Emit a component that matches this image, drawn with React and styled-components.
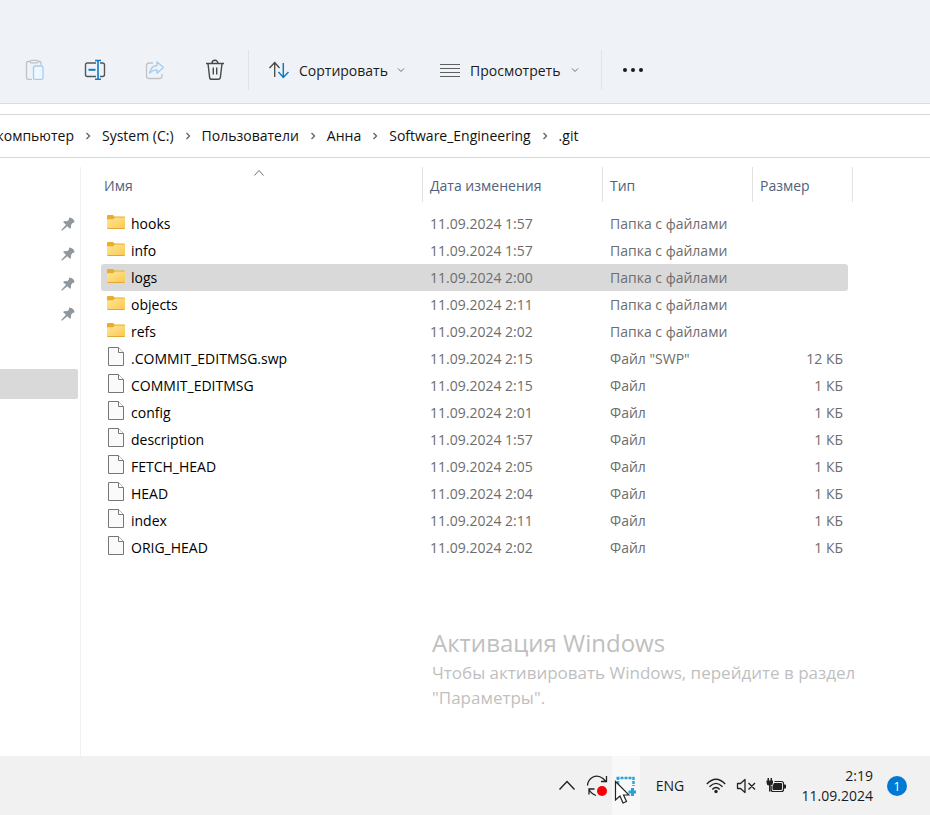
import React from "react";
import styled, { createGlobalStyle } from "styled-components";

const GlobalStyle = createGlobalStyle`
  * { box-sizing: border-box; }
  body {
    margin: 0;
    background: #fff;
    color: #1b1b1b;
    font: 14px/20px "Open Sans", "Noto Sans", sans-serif;
  }
  button {
    margin: 0;
    padding: 0;
    border: 0;
    background: none;
    color: inherit;
    font: inherit;
  }
  svg { display: block; flex: none; }
`;

const Page = styled.div`
  position: relative;
  display: flex;
  flex-direction: column;
  min-height: 100vh;
  overflow: hidden;
`;

const Toolbar = styled.header`
  display: flex;
  align-items: center;
  padding: 50px 0 13px 5px;
  background: #eff3f8;
  border-bottom: 1px solid #d9dde2;
`;

const ToolIcon = styled.button`
  display: grid;
  place-items: center;
  width: 60px;
  height: 40px;
`;

const ToolDivider = styled.span`
  width: 1px;
  height: 40px;
  margin-left: ${(p) => (p.$wide ? 22 : 3)}px;
  background: #dfe3e8;
`;

const ToolMenu = styled.button`
  display: flex;
  align-items: center;
  gap: ${(p) => p.$gap}px;
  height: 40px;
  margin-left: ${(p) => p.$offset}px;
`;

const ToolLabel = styled.span`
  width: ${(p) => p.$width}px;
  padding-top: 1px;
  text-align: left;
  white-space: nowrap;
`;

const AddressBar = styled.nav`
  margin-top: 10px;
  border: solid #d6d6d6;
  border-width: 1px 0;
`;

const Crumbs = styled.ol`
  display: flex;
  align-items: center;
  height: 42px;
  margin: 0;
  padding: 0;
  list-style: none;
  color: #111;
`;

const Crumb = styled.li`
  display: flex;
  align-items: center;
  justify-content: flex-end;
  flex: none;
  width: ${(p) => (p.$clipped ? "74px" : "auto")};
`;

const CrumbLink = styled.a`
  color: inherit;
  text-decoration: none;
  white-space: nowrap;
`;

const CrumbArrow = styled.li`
  display: grid;
  place-items: center;
  flex: none;
  width: 28px;
`;

const Body = styled.div`
  display: flex;
  flex: 1;
  padding-top: 9px;
`;

const Sidebar = styled.aside`
  flex: none;
  width: 81px;
  padding: 42px 2px 0 0;
  border-right: 1px solid #f1f1f1;
`;

const PinButton = styled.button`
  display: flex;
  align-items: center;
  justify-content: flex-end;
  width: 100%;
  height: 30px;
  padding-right: 3px;
`;

const CurrentPlace = styled.div`
  height: 30px;
  margin-top: 40px;
  border-radius: 0 2px 2px 0;
  background: #d9d9d9;
`;

const Main = styled.main`
  flex: 1;
  min-width: 0;
  padding-left: 20px;
`;

const FileTable = styled.table`
  width: 752px;
  table-layout: fixed;
  border-collapse: separate;
  border-spacing: 0;
`;

const Col = styled.col`
  width: ${(p) => p.$width}px;
`;

const HeadCell = styled.th`
  height: 43px;
  padding: 0;
  vertical-align: top;
  text-align: left;
  font-weight: 400;
`;

const HeadButton = styled.button`
  position: relative;
  display: block;
  width: 100%;
  height: 35px;
  padding: 3px 0 0 ${(p) => (p.$first ? 3 : 7)}px;
  border-right: 1px solid #e2e2e2;
  color: #51627a;
  text-align: left;
`;

const SortMark = styled.span`
  position: absolute;
  top: 2px;
  left: calc(50% - 9px);
`;

const Row = styled.tr`
  height: 27px;
  color: #6d6d6d;

  td {
    padding: 0 0 0 7px;
    white-space: nowrap;
    background: ${(p) => (p.$selected ? "#d9d9d9" : "transparent")};
    background-clip: padding-box;
  }
  td:first-child {
    padding-left: 5px;
    border-radius: 3px 0 0 3px;
    color: #000;
  }
  td:last-child {
    padding-right: 5px;
    border-right: 5px solid transparent;
    border-radius: 0 8px 8px 0 / 0 3px 3px 0;
    text-align: right;
  }
`;

const FileName = styled.div`
  display: flex;
  align-items: center;
  gap: 5px;

  svg { margin-bottom: 3px; }
`;

const Watermark = styled.div`
  position: absolute;
  right: 58px;
  bottom: 105px;
  width: 440px;
  color: #bfbfbf;
  font-size: 17px;
  line-height: 25px;
  pointer-events: none;
`;

const WatermarkTitle = styled.div`
  font-size: 24px;
  line-height: 34px;
`;

const Taskbar = styled.footer`
  display: flex;
  align-items: center;
  justify-content: flex-end;
  height: 59px;
  padding-right: 23px;
  background: #f1f1f1;
`;

const TrayButton = styled.button`
  position: relative;
  display: grid;
  place-items: center;
  width: ${(p) => p.$width || 30}px;
  height: 100%;
  background: ${(p) => (p.$hover ? "#f8f8f8" : "transparent")};
`;

const Clock = styled.button`
  width: 82px;
  margin-right: 14px;
  text-align: right;
  font-size: 14px;
`;

const Badge = styled.button`
  width: 20px;
  height: 20px;
  border-radius: 50%;
  background: #0078d4;
  color: #fff;
  font-size: 13px;
  line-height: 20px;
  text-align: center;
`;

const Pointer = styled.span`
  position: absolute;
  top: 24px;
  left: 2px;
`;

const Svg = ({ w, h = w, children, ...rest }) => (
  <svg width={w} height={h} viewBox={`0 0 ${w} ${h}`} fill="none" aria-hidden="true" {...rest}>
    {children}
  </svg>
);

const PasteIcon = () => (
  <Svg w={22} strokeWidth="1.3">
    <path d="M8 20.3H4Q2.5 20.3 2.5 18.5V4Q2.5 2.5 4 2.5H6M14 2.5h1.500Q17 2.500 17 4v2" stroke="#bfc3c8" />
    <rect x="6" y="1.300" width="8" height="2.600" rx="1.300" stroke="#bfc3c8" />
    <rect x="9.500" y="7" width="9.500" height="13.400" rx="1.500" stroke="#a3cdf0" fill="#eff6fd" />
  </Svg>
);

const RenameIcon = () => (
  <Svg w={22} strokeWidth="1.4">
    <path d="M12 4H3.500Q1.500 4 1.500 6v9.500Q1.500 17.500 3.500 17.500H12M16 4h2.500Q20.500 4 20.500 6v9.500Q20.500 17.500 18.500 17.500H16" stroke="#555" />
    <path d="M4.500 10.800h7" stroke="#0f7ac6" strokeWidth="2" />
    <path d="M11 1.500h6M11 20.300h6M14 1.500v19" stroke="#0f7ac6" strokeWidth="1.600" />
  </Svg>
);

const ShareIcon = () => (
  <Svg w={22} strokeWidth="1.3" strokeLinejoin="round">
    <path d="M9 4H5Q2.500 4 2.500 6.500v10.500Q2.500 19.500 5 19.500h10.500Q18 19.500 18 17v-2" stroke="#bfc3c8" />
    <path d="M13 3v3.500Q7 7 5.500 14Q9 10.600 13 10.800v3.400l6.500-5.700z" stroke="#a3cdf0" />
  </Svg>
);

const TrashIcon = () => (
  <Svg w={22} stroke="#484848" strokeWidth="1.4">
    <path d="M2 4.500h18M8 4.300a3 3 0 0 1 6 0M4 4.500l1.600 13.800Q5.800 20.300 7.700 20.300h6.600Q16.200 20.300 16.400 18.300L18 4.500M9.300 8.500v7M12.700 8.500v7" />
  </Svg>
);

const SortIcon = () => (
  <Svg w={20} h={20} strokeWidth="1.3">
    <path d="M5.700 17V2.500M.500 8l5.200-5.500L10.500 8" stroke="#454545" />
    <path d="M14.300 3v14.500M9.500 12l4.800 5.500L19.500 12" stroke="#0f7ac6" strokeWidth="1.500" />
  </Svg>
);

const ListIcon = () => (
  <Svg w={20} stroke="#606060">
    <path d="M0 4.500h20M0 8.500h20M0 12.500h20M0 16.500h20" />
  </Svg>
);

const DownIcon = () => (
  <Svg w={8} stroke="#707070">
    <path d="M1 2.500l3 3 3-3" />
  </Svg>
);

const DotsIcon = () => (
  <Svg w={22} h={6} fill="#1b1b1b">
    <circle cx="3" cy="3" r="2" />
    <circle cx="11" cy="3" r="2" />
    <circle cx="19" cy="3" r="2" />
  </Svg>
);

const CrumbIcon = () => (
  <Svg w={8} h={8} stroke="#606060" strokeWidth="1.300">
    <path d="M2.500 1l3 3-3 3" />
  </Svg>
);

const PinIcon = () => (
  <Svg w={14} h={14} fill="#8f989f">
    <path d="M8.300.500Q10.500.500 12 2t1.500 3.300Q12.500 6 11.500 6L10 8q.500 2-.800 4L6.300 9.200 1 13.800.200 13 5 7.800 2 5Q4 3.700 6.200 4.300L8 2.500Q7.800 1.500 8.300.500z" />
  </Svg>
);

const FolderIcon = () => (
  <Svg w={20} h={18}>
    <defs>
      <linearGradient id="folder" x1="0" y1="0" x2="1" y2="1">
        <stop offset="0" stopColor="#ffe59a" />
        <stop offset="1" stopColor="#fbc94c" />
      </linearGradient>
    </defs>
    <path d="M1 3Q1 2 2 2h5l1.500 1.500H18q1 0 1 1V9H1z" fill="#e9ad28" />
    <path d="M1 6.200h6L9 4.500h10V15q0 1-1 1H2q-1 0-1-1z" fill="url(#folder)" />
    <path d="M1.500 15.500h17" stroke="#e0a83b" />
  </Svg>
);

const FileIcon = () => (
  <Svg w={20} h={22} stroke="#777">
    <path d="M2.500 1.500h10l5 5v13h-15z" fill="#fafafa" />
    <path d="M12.500 1.500v5h5" fill="#fff" />
  </Svg>
);

const UpIcon = ({ w = 14, h = 8, color = "#707070", weight = 1 }) => (
  <Svg w={w} h={h} stroke={color} strokeWidth={weight}>
    <path d={`M1.500 ${h - 1.5}L${w / 2} 1.500L${w - 1.5} ${h - 1.5}`} />
  </Svg>
);

const SyncIcon = () => (
  <Svg w={22} h={24} stroke="#222" strokeWidth="1.300">
    <path d="M1.500 11.500Q2 5.500 7 3t10 1.500l3 3M20.500 2v5.500H15M8.500 15H3v5.500M3 15.500Q5.500 20 10 21.500" />
    <circle cx="16" cy="17" r="5" fill="#f60008" stroke="none" />
  </Svg>
);

const SnipIcon = () => (
  <Svg w={20} h={20} stroke="#27a3da" strokeWidth="2.400">
    <path d="M.500 2h18M2 1v17M17.500 1v9M2 17.500h9" strokeDasharray="3 1" />
    <path d="M16.500 12v8M12.500 16h8" strokeWidth="3" />
  </Svg>
);

const PointerIcon = () => (
  <Svg w={16} h={25}>
    <path d="M1.500 1.500v18.500l4.500-4 3 7 3.500-1.500-3-6.500h5.500z" fill="#fff" stroke="#222" strokeWidth="1.200" />
  </Svg>
);

const WifiIcon = () => (
  <Svg w={20} h={18} stroke="#222" strokeWidth="1.400">
    <path d="M.800 7Q10-2.500 19.200 7M3.500 9.800q6.500-6.800 13 0M6.300 12.500q3.700-3.900 7.400 0" />
    <circle cx="10" cy="14.500" r="1.700" fill="#222" stroke="none" />
  </Svg>
);

const VolumeIcon = () => (
  <Svg w={20} h={18} stroke="#222" strokeWidth="1.300" strokeLinejoin="round">
    <path d="M1.500 6.500h3l4.500-4v13l-4.500-4h-3zM12.500 6l6.500 6.500M19 6l-6.500 6.500" />
  </Svg>
);

const BatteryIcon = () => (
  <Svg w={20} h={18}>
    <path d="M8.500 4.500H15.500Q17.500 4.500 17.500 6.500v6Q17.500 14.500 15.500 14.500H7Q5.200 14.500 5.200 12.500V9" stroke="#222" strokeWidth="1.200" />
    <path d="M8 6h7q1 0 1 1v5q0 1-1 1H7.500q-1 0-1-1V9zM18 7.500h1.200q.800 0 .800.800v2.400q0 .800-.800.800H18z" fill="#222" />
    <path d="M.500 3.500h6.500v2Q7 8.200 4.500 8.500V14.500H3V8.500Q.500 8.200.500 5.500zM1.500 1H3v3H1.500zM4.500 1H6v3H4.500z" fill="#222" />
  </Svg>
);

const crumbs = ["компьютер", "System (C:)", "Пользователи", "Анна", "Software_Engineering", ".git"];

const columns = [
  { title: "Имя", width: 322 },
  { title: "Дата изменения", width: 180 },
  { title: "Тип", width: 150 },
  { title: "Размер", width: 100 },
];

const files = [
  ["hooks", "1:57", "Папка с файлами", ""],
  ["info", "1:57", "Папка с файлами", ""],
  ["logs", "2:00", "Папка с файлами", ""],
  ["objects", "2:11", "Папка с файлами", ""],
  ["refs", "2:02", "Папка с файлами", ""],
  [".COMMIT_EDITMSG.swp", "2:15", "Файл \"SWP\"", "12 КБ"],
  ["COMMIT_EDITMSG", "2:15", "Файл", "1 КБ"],
  ["config", "2:01", "Файл", "1 КБ"],
  ["description", "1:57", "Файл", "1 КБ"],
  ["FETCH_HEAD", "2:05", "Файл", "1 КБ"],
  ["HEAD", "2:04", "Файл", "1 КБ"],
  ["index", "2:11", "Файл", "1 КБ"],
  ["ORIG_HEAD", "2:02", "Файл", "1 КБ"],
];

export default function App() {
  return (
    <Page>
      <GlobalStyle />
      <Toolbar>
        <ToolIcon aria-label="Вставить" disabled><PasteIcon /></ToolIcon>
        <ToolIcon aria-label="Переименовать"><RenameIcon /></ToolIcon>
        <ToolIcon aria-label="Поделиться" disabled><ShareIcon /></ToolIcon>
        <ToolIcon aria-label="Удалить"><TrashIcon /></ToolIcon>
        <ToolDivider />
        <ToolMenu $offset={20} $gap={10}>
          <SortIcon />
          <ToolLabel $width={88}>Сортировать</ToolLabel>
          <DownIcon />
        </ToolMenu>
        <ToolMenu $offset={35} $gap={10}>
          <ListIcon />
          <ToolLabel $width={91}>Просмотреть</ToolLabel>
          <DownIcon />
        </ToolMenu>
        <ToolDivider $wide />
        <ToolMenu $offset={20} $gap={0} aria-label="Подробнее"><DotsIcon /></ToolMenu>
      </Toolbar>

      <AddressBar aria-label="Путь">
        <Crumbs>
          {crumbs.map((name, i) => (
            <React.Fragment key={name}>
              {i > 0 && <CrumbArrow aria-hidden="true"><CrumbIcon /></CrumbArrow>}
              <Crumb $clipped={i === 0}><CrumbLink href="#">{name}</CrumbLink></Crumb>
            </React.Fragment>
          ))}
        </Crumbs>
      </AddressBar>

      <Body>
        <Sidebar>
          {[1, 2, 3, 4].map((n) => (
            <PinButton key={n} aria-label={`Закреплено ${n}`}><PinIcon /></PinButton>
          ))}
          <CurrentPlace />
        </Sidebar>
        <Main>
          <FileTable>
            <colgroup>
              {columns.map((c) => <Col key={c.title} $width={c.width} />)}
            </colgroup>
            <thead>
              <tr>
                {columns.map((c, i) => (
                  <HeadCell key={c.title} scope="col">
                    <HeadButton $first={i === 0}>
                      {c.title}
                      {i === 0 && <SortMark><UpIcon w={12} h={8} /></SortMark>}
                    </HeadButton>
                  </HeadCell>
                ))}
              </tr>
            </thead>
            <tbody>
              {files.map(([name, time, type, size], i) => (
                <Row key={name} $selected={name === "logs"}>
                  <td>
                    <FileName>
                      {i < 5 ? <FolderIcon /> : <FileIcon />}
                      {name}
                    </FileName>
                  </td>
                  <td>11.09.2024 {time}</td>
                  <td>{type}</td>
                  <td>{size}</td>
                </Row>
              ))}
            </tbody>
          </FileTable>
        </Main>
      </Body>

      <Watermark>
        <WatermarkTitle>Активация Windows</WatermarkTitle>
        Чтобы активировать Windows, перейдите в раздел "Параметры".
      </Watermark>

      <Taskbar>
        <TrayButton aria-label="Скрытые значки"><UpIcon w={18} h={11} color="#222" weight={1.4} /></TrayButton>
        <TrayButton aria-label="Обновление"><SyncIcon /></TrayButton>
        <TrayButton $width={28} $hover aria-label="Снимок экрана">
          <SnipIcon />
          <Pointer><PointerIcon /></Pointer>
        </TrayButton>
        <TrayButton $width={60}>ENG</TrayButton>
        <TrayButton $width={31} aria-label="Сеть"><WifiIcon /></TrayButton>
        <TrayButton aria-label="Громкость"><VolumeIcon /></TrayButton>
        <TrayButton aria-label="Батарея"><BatteryIcon /></TrayButton>
        <Clock>2:19<br />11.09.2024</Clock>
        <Badge>1</Badge>
      </Taskbar>
    </Page>
  );
}
